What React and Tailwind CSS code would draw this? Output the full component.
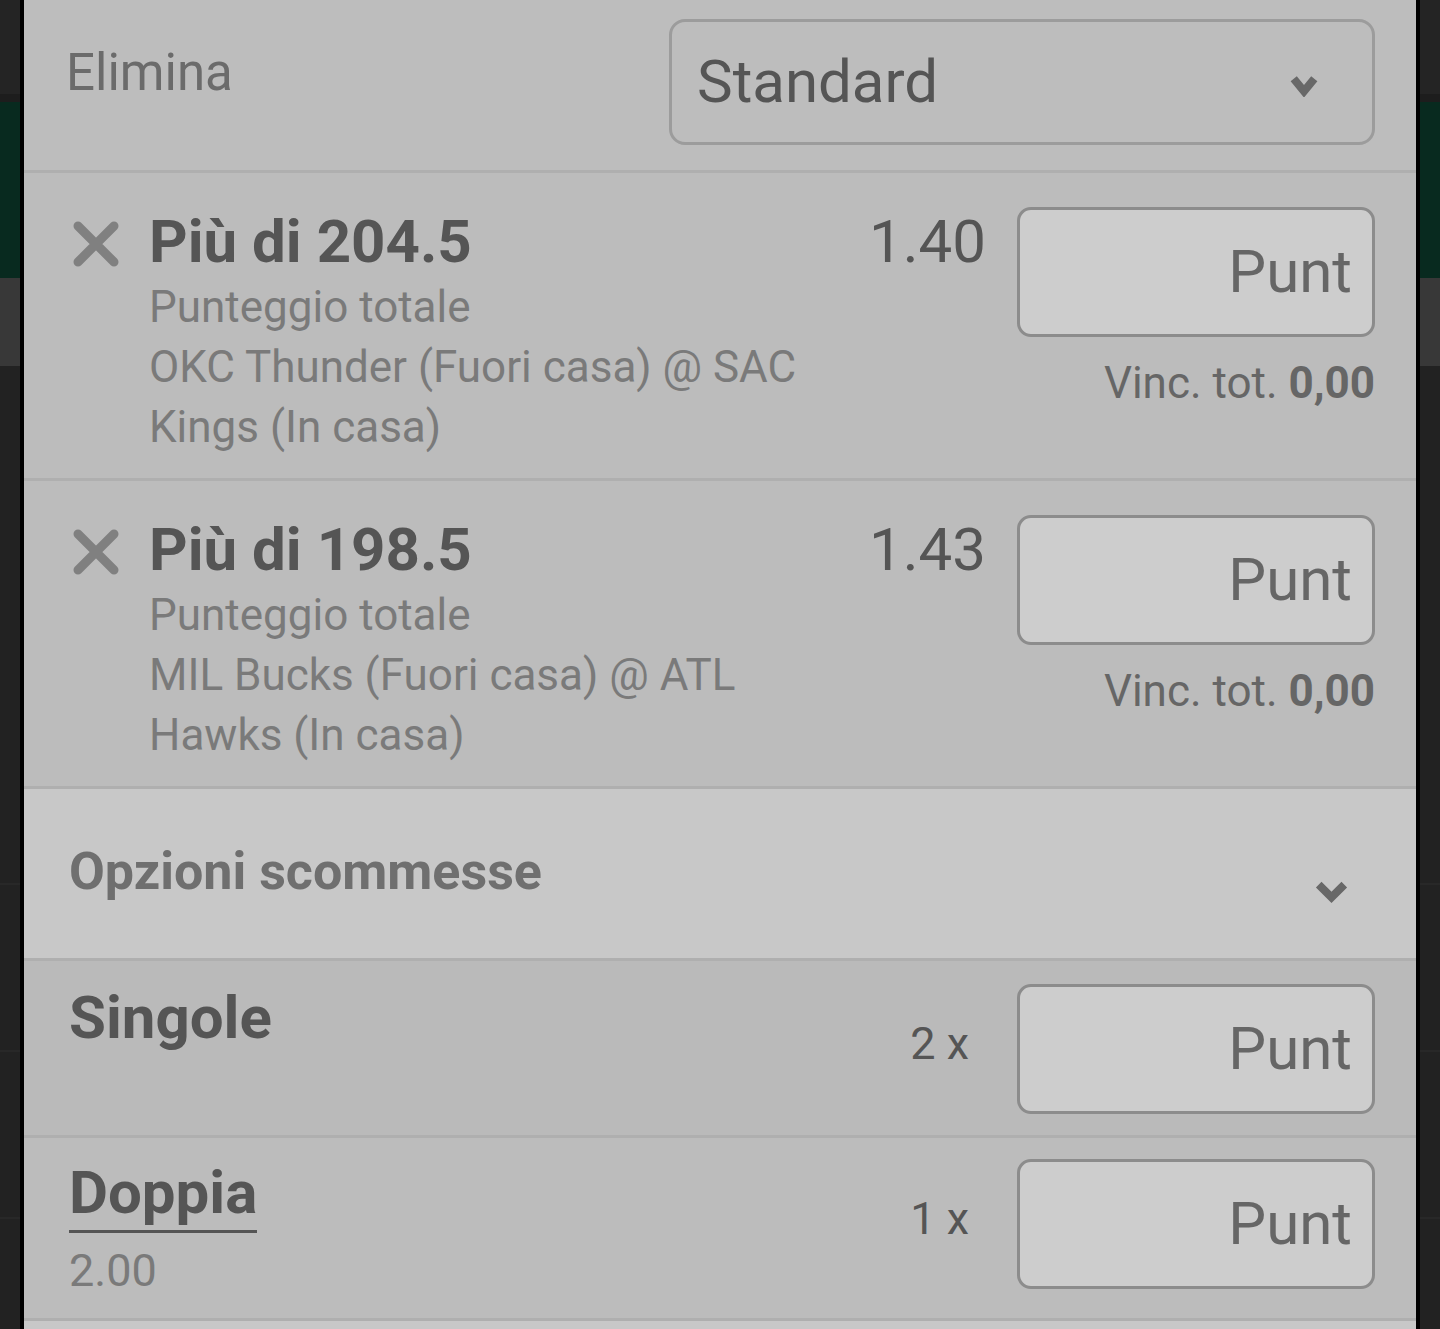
import React from "react";

const bets = [
  {
    title: "Più di 204.5",
    market: "Punteggio totale",
    event: "OKC Thunder (Fuori casa) @ SAC Kings (In casa)",
    odds: "1.40",
  },
  {
    title: "Più di 198.5",
    market: "Punteggio totale",
    event: "MIL Bucks (Fuori casa) @ ATL Hawks (In casa)",
    odds: "1.43",
  },
];

const CloseIcon = () => (
  <svg width="46" height="46" viewBox="0 0 46 46" className="shrink-0 mt-[14px]">
    <path d="M5 5 L41 41 M41 5 L5 41" stroke="#808080" strokeWidth="9" strokeLinecap="round" fill="none" />
  </svg>
);

const Chevron = ({ w, h, sw }) => (
  <svg width={w} height={h} viewBox={`0 0 ${w} ${h}`}>
    <path d={`M${sw / 1.4} ${sw / 1.4} L${w / 2} ${h - sw / 1.4} L${w - sw / 1.4} ${sw / 1.4}`} stroke="#686868" strokeWidth={sw} fill="none" />
  </svg>
);

const StakeBox = () => (
  <div className="w-[358px] h-[130px] rounded-[14px] border-[3px] border-[#8c8c8c] bg-[#cdcdcd] flex items-center justify-end pr-[20px] text-[60px] text-[#666]">
    Punt
  </div>
);

const SideStrip = () => (
  <div className="w-[20px] flex flex-col bg-[#222]">
    <div className="h-[94px] bg-[#242424]" />
    <div className="h-[8px] bg-[#1d1d1d]" />
    <div className="h-[176px] bg-[#082a1f]" />
    <div className="h-[88px] bg-[#383838]" />
    <div className="h-[519px] border-b-[2px] border-[#282828]" />
    <div className="h-[167px] border-b-[2px] border-[#282828]" />
    <div className="h-[167px] border-b-[2px] border-[#282828]" />
    <div className="flex-1" />
  </div>
);

export default function App() {
  return (
    <div className="flex h-[1329px] w-[1440px] overflow-hidden bg-[#222] font-['Roboto',sans-serif]">
      <SideStrip />
      <div className="w-[4px] bg-black" />

      <div className="flex-1 flex flex-col bg-[#bcbcbc]">
        {/* header */}
        <div className="h-[170px] flex justify-between pl-[42px] pr-[41px] pt-[19px] bg-[#bdbdbd]">
          <div className="text-[51px] leading-[1] text-[#6b6b6b] pt-[28px]">Elimina</div>
          <div className="w-[706px] h-[126px] rounded-[16px] border-[3px] border-[#9c9c9c] flex items-center justify-between pl-[25px] pr-[52px]">
            <span className="text-[60px] text-[#555]">Standard</span>
            <div className="mt-[6px]">
              <Chevron w={32} h={24} sw={8} />
            </div>
          </div>
        </div>

        {bets.map((b) => (
          <div key={b.title} className="border-t-[3px] border-[#afafaf] h-[308px] flex pl-[49px] pr-[41px] pt-[34px]">
            <CloseIcon />
            <div className="w-[700px] ml-[30px]">
              <div className="text-[60px] leading-[70px] font-bold text-[#555]">{b.title}</div>
              <div className="text-[44px] leading-[60px] text-[#7a7a7a]">{b.market}</div>
              <div className="text-[44px] leading-[60px] text-[#7a7a7a]">{b.event}</div>
            </div>
            <div className="flex-1 text-right pr-[31px] text-[60px] leading-[70px] text-[#555]">{b.odds}</div>
            <div className="flex flex-col items-end">
              <StakeBox />
              <div className="mt-[16px] text-[44px] leading-[60px] text-[#666]">
                Vinc. tot. <span className="font-bold">0,00</span>
              </div>
            </div>
          </div>
        ))}

        {/* options */}
        <div className="border-t-[3px] border-[#afafaf] h-[172px] bg-[#c8c8c8] flex items-center justify-between pl-[45px] pr-[66px]">
          <span className="text-[52px] font-bold text-[#6f6f6f] -mt-[4px]">Opzioni scommesse</span>
          <div className="mt-[34px]">
            <Chevron w={37} h={24} sw={8} />
          </div>
        </div>

        {/* singole */}
        <div className="border-t-[3px] border-[#afafaf] h-[177px] bg-[#bababa] flex pl-[45px] pr-[41px] pt-[23px]">
          <div className="flex-1 text-[60px] leading-[68px] font-bold text-[#555]">Singole</div>
          <div className="w-[120px] pr-[48px] text-right text-[45px] text-[#555] self-start mt-[26px]">2 x</div>
          <StakeBox />
        </div>

        {/* doppia */}
        <div className="border-t-[3px] border-[#afafaf] h-[183px] bg-[#bcbcbc] flex pl-[45px] pr-[41px] pt-[21px]">
          <div className="flex-1 flex flex-col items-start">
            <span className="text-[60px] leading-[68px] pb-[3px] font-bold text-[#555] border-b-[3px] border-[#555]">Doppia</span>
            <span className="text-[45px] leading-[60px] text-[#7a7a7a] mt-[8px]">2.00</span>
          </div>
          <div className="w-[120px] pr-[48px] text-right text-[45px] text-[#555] self-start mt-[26px]">1 x</div>
          <StakeBox />
        </div>

        <div className="border-t-[3px] border-[#afafaf] flex-1 bg-[#c8c8c8]" />
      </div>

      <div className="w-[4px] bg-black" />
      <SideStrip />
    </div>
  );
}
